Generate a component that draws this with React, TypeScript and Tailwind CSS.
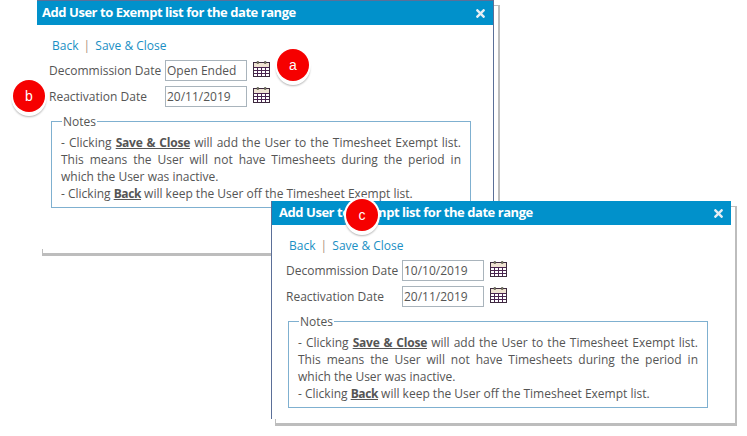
import React from "react";
import { FaTimes } from "react-icons/fa";

const CalendarIcon = () => (
  <svg width="18" height="18" viewBox="0 0 18 18" className="shrink-0">
    <rect x="0.5" y="2.5" width="16" height="14" fill="#fff" stroke="#3d2a3e" />
    <rect x="1" y="3" width="15" height="4" fill="#efe3d2" />
    <path
      d="M1 7.5h15M1 10.5h15M1 13.5h15M4.5 7v9M8.5 7v9M12.5 7v9"
      stroke="#4a2450"
      fill="none"
    />
    <path d="M4 3.5V1.5h1.5v2zM11.5 3.5V1.5H13v2z" fill="#8a8a72" stroke="#4f4f42" strokeWidth="0.6" />
  </svg>
);

const DateField = ({ label, value }: { label: string; value: string }) => (
  <div className="flex items-center h-[21px]">
    <span className="w-[116px] shrink-0 whitespace-nowrap">{label}</span>
    <div className="w-[82px] h-[21px] border border-[#a9b4bc] bg-white pl-[1px] leading-[19px] whitespace-nowrap">
      {value}
    </div>
    <div className="ml-[6px] mb-[4px]">
      <CalendarIcon />
    </div>
  </div>
);

const DialogBody = ({ decommission }: { decommission: string }) => (
  <div className="pl-[14px]">
    <div className="pl-[3px] pt-[12px] h-[35px] leading-[17px] text-[#1a8fc4]">
      Back <span className="text-[#a98f7a] mx-[2px]">|</span> Save &amp; Close
    </div>
    <div className="flex flex-col gap-[5px]">
      <DateField label="Decommission Date" value={decommission} />
      <DateField label="Reactivation Date" value="20/11/2019" />
    </div>
    <fieldset className="ml-[2px] mt-[7px] w-[420px] h-[94px] border border-[#7fb0d0] px-[9px]">
      <legend className="ml-[1px] px-[1px] leading-[15px]">Notes</legend>
      <div className="leading-[17px] text-justify pt-[5px]">
        - Clicking <b className="underline font-bold tracking-[-0.2px]">Save &amp; Close</b> will add the User to the Timesheet Exempt list.
        This means the User will not have Timesheets during the period in which the User was inactive.
        <br />- Clicking <b className="underline font-bold tracking-[-0.4px]">Back</b> will keep the User off the Timesheet Exempt list.
      </div>
    </fieldset>
  </div>
);

const Badge = ({ letter, className }: { letter: string; className: string }) => (
  <div
    className={`absolute w-[32px] h-[32px] rounded-full bg-[#f60000] shadow-[0_0_0_2px_#fff,0_3px_0_1px_#fff,0_4px_2px_1px_#b5b5b5] flex items-center justify-center text-white text-[14px] font-['Liberation_Sans',sans-serif] ${className}`}
  >
    {letter}
  </div>
);

const Title = ({ className }: { className: string }) => (
  <div className={`h-[24px] bg-[#0191cb] flex items-center justify-between pr-[6px] text-white ${className}`}>
    <span className="text-[13px] font-bold tracking-[-0.45px] whitespace-nowrap">
      Add User to Exempt list for the date range
    </span>
    <FaTimes className="w-[13px] h-[13px] text-[#e6eef4]" />
  </div>
);

export default function App() {
  return (
    <div className="relative w-[747px] h-[436px] overflow-hidden bg-white text-[12px] text-[#555] font-['Open_Sans',sans-serif]">
      {/* back window */}
      <div className="absolute left-[42px] top-[5px] w-[458px] h-[251px] border border-r-2 border-b-[3px] border-[#bdbdbd]" />
      <div className="absolute left-[37px] top-0 w-[457px] h-[249px] bg-white border-t border-r border-[#5b6f98]">
        <Title className="pl-[5px]" />
        <div className="-ml-[2px]">
          <DialogBody decommission="Open Ended" />
        </div>
      </div>

      {/* front window */}
      <div className="absolute left-[275px] top-[206px] w-[462px] h-[220px] border border-r-2 border-b-[3px] border-[#bdbdbd]" />
      <div className="absolute left-[271px] top-[201px] w-[460px] h-[218px] bg-white border-l border-[#5b6f98]">
        <Title className="pl-[7px]" />
        <DialogBody decommission="10/10/2019" />
      </div>

      <Badge letter="a" className="left-[277px] top-[49px]" />
      <Badge letter="b" className="left-[13px] top-[80px]" />
      <Badge letter="c" className="left-[346px] top-[199px]" />
    </div>
  );
}
